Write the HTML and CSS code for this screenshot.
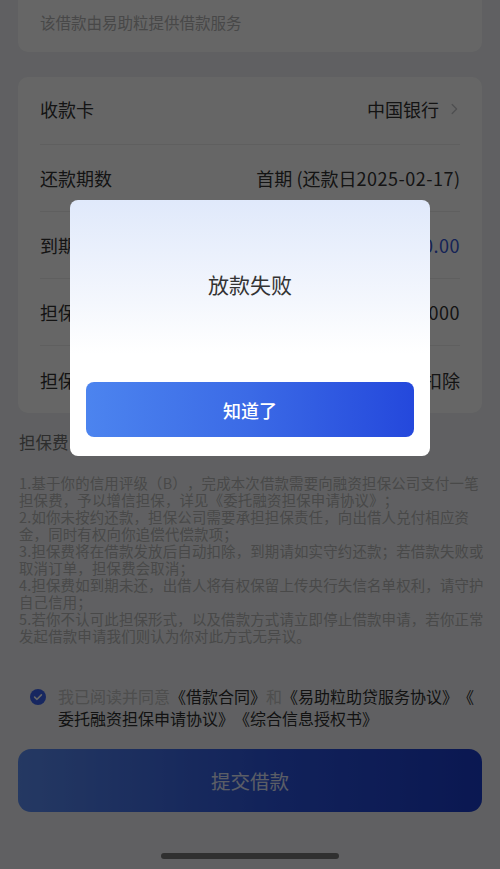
FILE: index.html
```html
<!DOCTYPE html>
<html lang="zh-CN">
<head>
<meta charset="utf-8">
<title>借款确认</title>
<link rel="stylesheet" href="styles.css">
</head>
<body>
<div class="page">
  <div class="card card-top">
    <p class="provider">该借款由易助粒提供借款服务</p>
  </div>

  <div class="card card-info">
    <div class="row">
      <span class="label">收款卡</span>
      <span class="value">中国银行<svg class="chev" width="7" height="12" viewBox="0 0 7 12"><path d="M1.2 1.5 L5.6 6 L1.2 10.5" fill="none" stroke="#c4c6ca" stroke-width="1.4" stroke-linecap="round" stroke-linejoin="round"/></svg></span>
    </div>
    <div class="row">
      <span class="label">还款期数</span>
      <span class="value">首期 (还款日<span class="num">2025-02-17</span>)</span>
    </div>
    <div class="row">
      <span class="label">到期应还</span>
      <span class="value blue"><span class="num">10530.00</span></span>
    </div>
    <div class="row">
      <span class="label">担保费</span>
      <span class="value"><span class="num">300.000</span></span>
    </div>
    <div class="row">
      <span class="label">担保费收取方式</span>
      <span class="value">放款时扣除</span>
    </div>
  </div>

  <h3 class="sec-title">担保费</h3>
  <p class="notes">1.基于你的信用评级（B），完成本次借款需要向融资担保公司支付一笔<br>担保费，予以增信担保，详见《委托融资担保申请协议》；<br>2.如你未按约还款，担保公司需要承担担保责任，向出借人兑付相应资<br>金，同时有权向你追偿代偿款项；<br>3.担保费将在借款发放后自动扣除，到期请如实守约还款；若借款失败或<br>取消订单，担保费会取消；<br>4.担保费如到期未还，出借人将有权保留上传央行失信名单权利，请守护<br>自己信用；<br>5.若你不认可此担保形式，以及借款方式请立即停止借款申请，若你正常<br>发起借款申请我们则认为你对此方式无异议。</p>

  <div class="agree">
    <span class="check"><svg width="16" height="16" viewBox="0 0 16 16"><circle cx="8" cy="8" r="8" fill="#3b63f0"/><path d="M4.6 8.1 L7 10.3 L11.4 5.9" fill="none" stroke="#fff" stroke-width="1.6" stroke-linecap="round" stroke-linejoin="round"/></svg></span>
    <p class="agree-text"><span class="muted">我已阅读并同意</span>《借款合同》<span class="muted">和</span>《易助粒助贷服务协议》《<br>委托融资担保申请协议》《综合信息授权书》</p>
  </div>

  <button class="submit">提交借款</button>
</div>

<div class="overlay">
  <div class="modal">
    <p class="modal-title">放款失败</p>
    <button class="modal-btn">知道了</button>
  </div>
</div>
<div class="home-bar"></div>
</body>
</html>
```

FILE: styles.css
```css
* { box-sizing: border-box; }
html, body {
  margin: 0;
  padding: 0;
}
body {
  background: #eff1f4;
  font-family: "Noto Sans CJK SC", "Noto Sans", sans-serif;
  text-spacing-trim: space-all;
  width: 500px;
  height: 869px;
  overflow: hidden;
}
.page {
  display: flex;
  flex-direction: column;
  padding: 0 18px;
}
.card {
  background: #ffffff;
  border-radius: 10px;
}
.card-top {
  border-radius: 0 0 10px 10px;
  padding: 11px 22px 19px;
}
.provider {
  margin: 0;
  font-size: 15.5px;
  line-height: 22px;
  color: #b4b4b4;
}
.card-info {
  margin-top: 25px;
  padding: 0 22px;
}
.row {
  height: 67px;
  display: flex;
  align-items: center;
  justify-content: space-between;
  border-bottom: 1px solid #eeeeee;
}
.row:first-child {
  height: 68px;
  padding-bottom: 4px;
}
.row:last-child { border-bottom: none; }
.label, .value {
  font-size: 18px;
  color: #333333;
  white-space: nowrap;
}
.value {
  display: flex;
  align-items: center;
}
.num {
  letter-spacing: 0.5px;
}
.value.blue { color: #3557d8; }
.chev { margin-left: 12px; margin-right: 2px; }
.sec-title {
  margin: 18px 0 0 1px;
  font-size: 16.5px;
  line-height: 22px;
  font-weight: normal;
  color: #707070;
}
.notes {
  margin: 21px 0 0 1px;
  font-size: 14.4px;
  line-height: 17px;
  letter-spacing: 0.2px;
  color: #b6b6b6;
  white-space: nowrap;
}
.agree {
  margin-top: 42px;
  display: flex;
  align-items: flex-start;
  padding-left: 12px;
}
.check {
  width: 16px;
  height: 16px;
  margin-top: 3px;
  flex: none;
  display: flex;
}
.agree-text {
  margin: 0 0 0 12px;
  font-size: 16px;
  line-height: 21.5px;
  color: #2e2e2e;
  white-space: nowrap;
}
.muted { color: #c2c2c2; }
.submit {
  margin-top: 20px;
  height: 63px;
  width: 100%;
  border: none;
  border-radius: 13px;
  background: linear-gradient(90deg, #5c8ef6 0%, #2c55e0 55%, #1b3ccc 100%);
  color: #e4ebff;
  font-family: inherit;
  font-size: 19.5px;
}
.overlay {
  position: fixed;
  inset: 0;
  background: rgba(0, 0, 0, 0.6);
  display: flex;
  justify-content: center;
  align-items: flex-start;
  padding-top: 200px;
}
.modal {
  width: 360px;
  height: 256px;
  border-radius: 8px;
  background: linear-gradient(180deg, #e0e9fb 0%, #f4f7fd 40%, #ffffff 60%);
  display: flex;
  flex-direction: column;
  padding: 71px 16px 19px;
}
.modal-title {
  margin: 0;
  text-align: center;
  font-size: 21px;
  line-height: 26px;
  color: #333333;
}
.modal-btn {
  margin-top: 85px;
  height: 55px;
  border: none;
  border-radius: 8px;
  background: linear-gradient(90deg, #4c84ef 0%, #3b6ae6 50%, #2448dc 100%);
  color: #ffffff;
  font-family: inherit;
  font-size: 18px;
  font-weight: 500;
}
.home-bar {
  position: fixed;
  left: 161px;
  bottom: 10px;
  width: 178px;
  height: 6px;
  border-radius: 3px;
  background: #303030;
}
```
